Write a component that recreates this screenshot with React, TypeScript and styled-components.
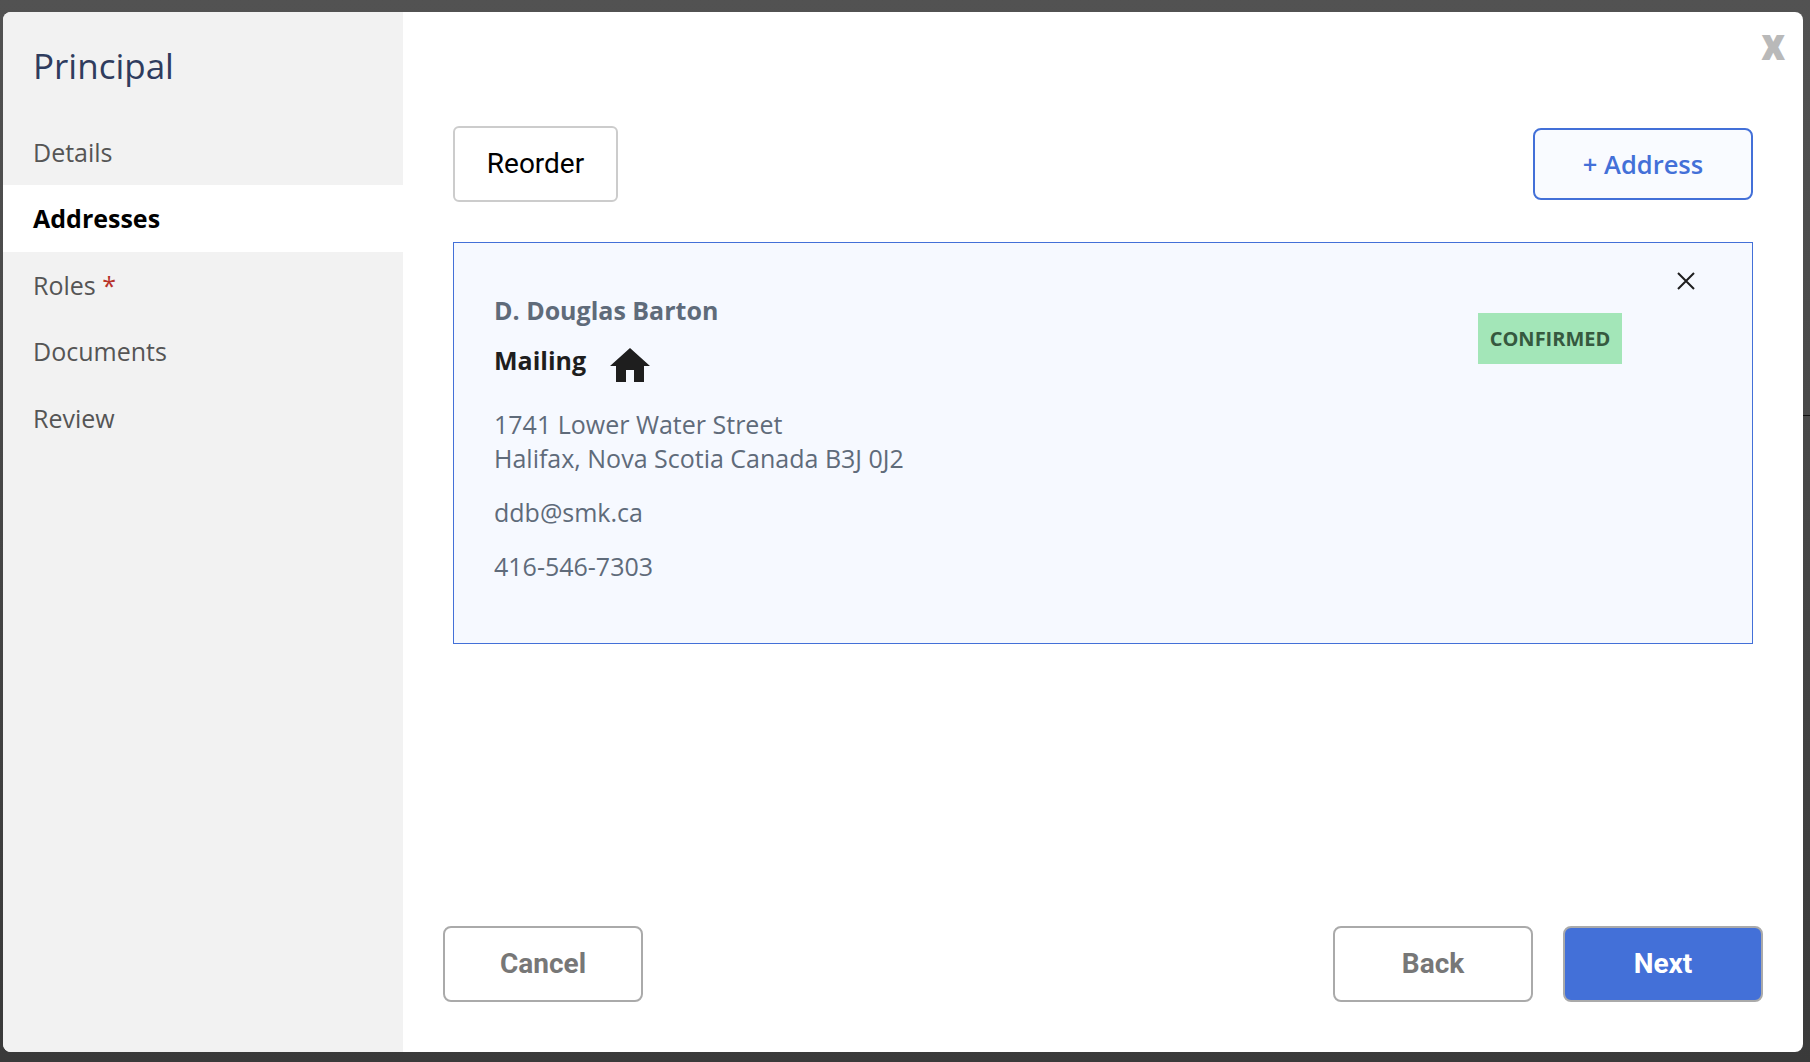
import React from "react";
import styled, { createGlobalStyle } from "styled-components";

const GlobalStyle = createGlobalStyle`
  html, body {
    margin: 0;
    padding: 0;
    background: #474747;
  }
  * {
    box-sizing: border-box;
  }
`;

const Overlay = styled.div`
  position: relative;
  width: 1810px;
  height: 1062px;
  padding: 12px 7px 10px 3px;
  background: linear-gradient(180deg, #525252 0%, #3a3a3a 100%);
  overflow: hidden;
  &::after {
    content: "";
    position: absolute;
    top: 415px;
    right: 0;
    width: 7px;
    height: 1px;
    background: #111;
  }
`;

const Modal = styled.div`
  position: relative;
  z-index: 1;
  display: flex;
  height: 100%;
  background: #fff;
  border-radius: 8px;
  overflow: hidden;
  font-family: "Open Sans", sans-serif;
`;

const Sidebar = styled.nav`
  width: 400px;
  flex-shrink: 0;
  background: #f2f2f2;
`;

const Title = styled.h1`
  margin: 0;
  padding: 2px 0 0 30px;
  height: 106.5px;
  line-height: 104px;
  font-size: 35px;
  font-weight: 400;
  color: #2f3c5e;
`;

const NavItem = styled.div<{ $active?: boolean }>`
  height: 66.5px;
  padding: ${(p) => (p.$active ? "0" : "1px")} 0 0 30px;
  line-height: ${(p) => (p.$active ? "66.5px" : "65.5px")};
  font-size: 25px;
  font-weight: ${(p) => (p.$active ? 700 : 400)};
  color: ${(p) => (p.$active ? "#000" : "#555")};
  background: ${(p) => (p.$active ? "#fff" : "transparent")};
`;

const Required = styled.span`
  color: #b8322a;
`;

const Main = styled.main`
  flex: 1;
  display: flex;
  flex-direction: column;
  padding: 114px 50px 50px 50px;
`;

const CloseModal = styled.div`
  position: absolute;
  top: 9px;
  right: 18px;
  font-family: Roboto, sans-serif;
  font-weight: 900;
  font-size: 46px;
  line-height: 46px;
  color: #b9b9b9;
`;

const Toolbar = styled.div`
  display: flex;
  justify-content: space-between;
  align-items: center;
  height: 76px;
  margin-bottom: 40px;
`;

const ReorderButton = styled.button`
  width: 165px;
  height: 76px;
  padding: 0 0 2px;
  background: #fff;
  border: 2px solid #ccc;
  border-radius: 6px;
  font-family: Roboto, sans-serif;
  font-size: 28px;
  color: #000;
`;

const AddButton = styled.button`
  width: 220px;
  height: 72px;
  padding: 0;
  background: #f9fbff;
  border: 2px solid #4370d8;
  border-radius: 8px;
  font-family: "Open Sans", sans-serif;
  font-size: 25.5px;
  font-weight: 600;
  color: #4370d8;
`;

const Card = styled.section`
  position: relative;
  display: flex;
  justify-content: space-between;
  align-items: flex-start;
  height: 402px;
  padding: 49px 130px 0 40px;
  background: #f6f9ff;
  border: 1px solid #4370d8;
`;

const Details = styled.div`
  display: flex;
  flex-direction: column;
`;

const Name = styled.div`
  font-size: 25px;
  line-height: 36px;
  font-weight: 700;
  color: #5f6b7a;
`;

const KindRow = styled.div`
  display: flex;
  align-items: flex-start;
  gap: 24px;
  margin-top: 14px;
  font-size: 25px;
  line-height: 36px;
  font-weight: 700;
  color: #1e1e1e;
`;

const HouseIcon = styled.svg`
  width: 40px;
  height: 34px;
  margin-top: 6px;
  fill: #1e1e1e;
`;

const Line = styled.p`
  margin: 0;
  font-size: 25px;
  line-height: 34px;
  color: #5f6b7a;
`;

const Block = styled.div`
  margin-top: 20px;
`;

const AddressBlock = styled(Block)`
  margin-top: 25px;
`;

const Status = styled.div`
  margin-top: 21px;
  width: 144px;
  height: 51px;
  line-height: 51px;
  text-align: center;
  background: #a3e6b8;
  color: #36593f;
  font-size: 20px;
  font-weight: 700;
`;

const RemoveIcon = styled.svg`
  position: absolute;
  top: 28px;
  right: 56px;
  width: 20px;
  height: 20px;
  stroke: #1e1e1e;
  stroke-width: 2;
  fill: none;
`;

const Footer = styled.div`
  display: flex;
  justify-content: space-between;
  margin-top: auto;
  margin-left: -10px;
  margin-right: -10px;
`;

const FooterGroup = styled.div`
  display: flex;
  gap: 30px;
`;

const FooterButton = styled.button<{ $primary?: boolean }>`
  width: 200px;
  height: 76px;
  padding: 0 0 2px;
  border: 2px solid #aaa;
  border-radius: 8px;
  background: ${(p) => (p.$primary ? "#4370d8" : "#fff")};
  color: ${(p) => (p.$primary ? "#fff" : "#777")};
  font-family: Roboto, sans-serif;
  font-size: 28px;
  font-weight: 700;
`;

const navItems = ["Details", "Addresses", "Roles", "Documents", "Review"];

export default function App() {
  return (
    <>
      <GlobalStyle />
      <Overlay>
        <Modal>
          <Sidebar>
            <Title>Principal</Title>
            {navItems.map((item) => (
              <NavItem key={item} $active={item === "Addresses"}>
                {item}
                {item === "Roles" && <Required> *</Required>}
              </NavItem>
            ))}
          </Sidebar>
          <Main>
            <CloseModal>x</CloseModal>
            <Toolbar>
              <ReorderButton>Reorder</ReorderButton>
              <AddButton>+ Address</AddButton>
            </Toolbar>
            <Card>
              <Details>
                <Name>D. Douglas Barton</Name>
                <KindRow>
                  Mailing
                  <HouseIcon viewBox="0 0 40 34">
                    <path d="M20 0 L40 18 H34 V34 H24 V22 H16 V34 H6 V18 H0 Z" />
                  </HouseIcon>
                </KindRow>
                <AddressBlock>
                  <Line>1741 Lower Water Street</Line>
                  <Line>Halifax, Nova Scotia Canada B3J 0J2</Line>
                </AddressBlock>
                <Block>
                  <Line>ddb@smk.ca</Line>
                </Block>
                <Block>
                  <Line>416-546-7303</Line>
                </Block>
              </Details>
              <Status>CONFIRMED</Status>
              <RemoveIcon viewBox="0 0 20 20">
                <path d="M2 2 L18 18 M18 2 L2 18" />
              </RemoveIcon>
            </Card>
            <Footer>
              <FooterButton>Cancel</FooterButton>
              <FooterGroup>
                <FooterButton>Back</FooterButton>
                <FooterButton $primary>Next</FooterButton>
              </FooterGroup>
            </Footer>
          </Main>
        </Modal>
      </Overlay>
    </>
  );
}
